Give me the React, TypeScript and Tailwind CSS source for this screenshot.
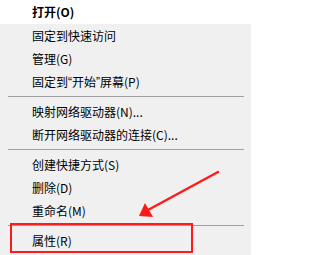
import React from "react";

type Item = { label: React.ReactNode; bold?: boolean; hover?: boolean } | "sep";

const q = (c: string) => (
  <span style={{ fontFamily: '"Liberation Sans", sans-serif' }}>{c}</span>
);

const items: Item[] = [
  { label: "打开(O)", bold: true, hover: true },
  { label: "固定到快速访问" },
  { label: "管理(G)" },
  {
    label: (
      <>
        固定到{q("“")}开始{q("”")}屏幕(P)
      </>
    ),
  },
  "sep",
  { label: "映射网络驱动器(N)..." },
  { label: "断开网络驱动器的连接(C)..." },
  "sep",
  { label: "创建快捷方式(S)" },
  { label: "删除(D)" },
  { label: "重命名(M)" },
  "sep",
  { label: "属性(R)" },
];

export default function App() {
  return (
    <div
      className="relative w-[251px] h-[255px] overflow-hidden bg-[#f0f0f0] text-[12px] text-[#000]"
      style={{ fontFamily: '"Noto Sans CJK SC", "Noto Sans", sans-serif' }}
    >
      <div className="flex flex-col">
        {items.map((it, i) =>
          it === "sep" ? (
            <div key={i} className="h-[7px] flex items-center pl-[8px] pr-[7px]">
              <div className="h-px w-full bg-[#a0a0a0]" />
            </div>
          ) : (
            <div
              key={i}
              className={`${it.hover ? "h-[24px] bg-white" : "h-[23px]"} flex items-center pl-[32px] leading-none whitespace-pre ${
                it.bold ? "font-bold" : ""
              }`}
            >
              {it.label}
            </div>
          )
        )}
      </div>
      <div className="absolute left-[10px] top-[223px] w-[183px] h-[30px] border-2 border-[#ff1a1a]" />
      <svg className="absolute left-0 top-0" width="251" height="255" viewBox="0 0 251 255">
        <line x1="218" y1="172" x2="148" y2="210" stroke="#ff1a1a" strokeWidth="2.4" strokeLinecap="round" />
        <polygon points="139,216 145,203 153,217" fill="#ff1a1a" />
      </svg>
    </div>
  );
}
